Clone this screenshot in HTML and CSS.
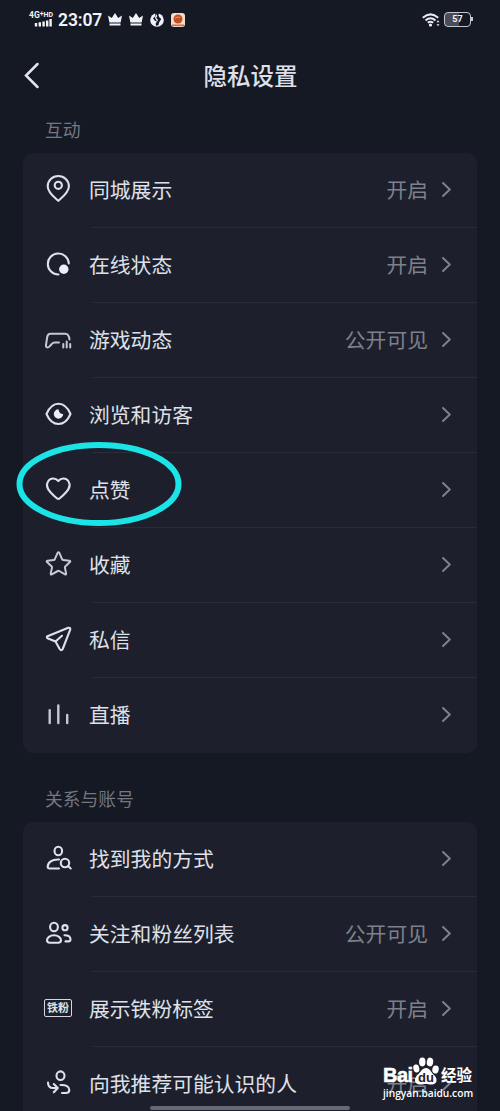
FILE: index.html
```html
<!DOCTYPE html>
<html lang="zh-CN">
<head>
<meta charset="utf-8">
<title>隐私设置</title>
<link rel="stylesheet" href="styles.css">
</head>
<body>
<svg class="defs" width="0" height="0">
  <symbol id="chev" viewBox="0 0 12 17"><path d="M2 2 8.800 8.500 2 15"/></symbol>
  <symbol id="crown" viewBox="0 0 14 13"><path d="M0 2.500 3.800 5 7 0l3.200 5L14 2.500 12.600 9.600H1.400ZM1.500 10.500h11v1.900h-11Z"/></symbol>
</svg>
<div class="phone">
  <div class="status">
    <div class="signal">
      <span class="net">4G<sup>+</sup><small>HD</small></span>
      <svg width="18" height="9" viewBox="0 0 18 9"><path d="M.8 5h2.400v3.500H.8ZM4.600 4.300H7v4.200H4.600ZM8.400 3.500h2.400v5H8.400ZM12 2.500h2.400v6H12ZM15.400 1h2.400v7.500h-2.400Z"/></svg>
    </div>
    <span class="time">23:07</span>
    <svg class="crown" width="14" height="13"><use href="#crown"/></svg>
    <svg class="crown" width="14" height="13"><use href="#crown"/></svg>
    <svg class="globe" width="14" height="14" viewBox="0 0 14 14"><circle cx="7" cy="7" r="6.800"/><path class="cut" d="M5.300 0H9.800L8.300 2 9.300 4.200 11.200 6 9 9.700 8.500 12 6.500 13 5.500 11 7 8.500 5 7.800 3 5.500 5 3.500Z"/><path d="M6 1 7.300 3 6.200 5 7.700 6.500 8 8.500 6.500 7.500 5 5Z"/></svg>
    <svg class="app" width="14" height="14" viewBox="0 0 14 14"><rect width="14" height="14" rx="3" fill="#f3dccb"/><circle cx="7" cy="6" r="4.500" fill="#c0501f"/><path d="M4 5.500Q6 3 9 4.500" stroke="#ef9a58" fill="none"/><path d="M1 12.300h12" stroke="#d86a4c" stroke-width="1.600"/></svg>
    <svg class="wifi" width="18" height="14" viewBox="0 0 18 14"><path d="M.8 4.700Q8.500-2 16.200 4.700M3.500 7.400Q8.500 3 13.500 7.400M5.800 9.800Q8.500 7.700 11.200 9.800"/><circle cx="8.500" cy="12" r="1.600"/><path class="dots" d="m16 7.300 1.500 2h-3ZM16 13.200l-1.500-2h3Z"/></svg>
    <div class="battery"><span>57</span></div>
  </div>

  <header class="bar">
    <svg class="back" width="16" height="27" viewBox="0 0 16 27"><path d="M13.500 2 2 13.500l11.500 11.500"/></svg>
    <h1>隐私设置</h1>
  </header>

  <h2 class="label">互动</h2>
  <ul class="card">
    <li class="row">
      <svg class="icon" viewBox="0 0 33 33"><path d="M16.300 27.800C14 25.500 5.700 20 5.700 13.200a10.600 10.200 0 0 1 21.200 0C26.900 20 18.600 25.500 16.300 27.800Z"/><circle cx="16.300" cy="12.300" r="3.600"/></svg>
      <div class="body"><span class="name">同城展示</span><span class="value">开启</span><svg class="chev"><use href="#chev"/></svg></div>
    </li>
    <li class="row">
      <svg class="icon" viewBox="0 0 33 33"><path d="M26.800 15.500A10.500 10.500 0 1 0 16.500 26.500"/><circle class="solid" cx="21.800" cy="21.300" r="4.700"/></svg>
      <div class="body"><span class="name">在线状态</span><span class="value">开启</span><svg class="chev"><use href="#chev"/></svg></div>
    </li>
    <li class="row">
      <svg class="icon dim" viewBox="0 0 33 33"><path d="M27.500 16.500C27 12.500 26 10.700 23.500 10.700H8.500C6.500 10.700 5.600 12 5.200 14L4 22c-.5 3 2.500 3 4 1l1.700-2q1.200-1.500 3-1.500H17"/><path d="M21.300 21v3.500M24.700 18.500v6M28.200 21v3.500"/></svg>
      <div class="body"><span class="name">游戏动态</span><span class="value">公开可见</span><svg class="chev"><use href="#chev"/></svg></div>
    </li>
    <li class="row">
      <svg class="icon" viewBox="0 0 33 33"><path d="M4.500 16C7.500 9 12 5.800 16.500 5.800S25.500 9 28.500 16C25.500 23 21 26 16.500 26S7.500 23 4.500 16Z"/><path class="solid" d="M16.500 11.300a4.700 4.700 0 1 0 4.700 4.700q-4.200.2-4.700-4.700Z"/></svg>
      <div class="body"><span class="name">浏览和访客</span><svg class="chev"><use href="#chev"/></svg></div>
    </li>
    <li class="row">
      <svg class="icon" viewBox="0 0 33 33"><path d="M16.300 8C13.500 4.500 8.500 4.700 6.300 8c-2.400 3.700-.8 8 2.200 11.200 2 2.200 4.200 4.300 6.300 6.100q1.500 1.300 3 0c2.100-1.800 4.300-3.900 6.300-6.100 3-3.200 4.600-7.500 2.200-11.200-2.200-3.300-7.200-3.500-10 0Z"/></svg>
      <div class="body"><span class="name">点赞</span><svg class="chev"><use href="#chev"/></svg></div>
      <svg class="ring" width="166" height="86" viewBox="0 0 166 86"><ellipse cx="83" cy="43" rx="79.500" ry="39"/></svg>
    </li>
    <li class="row">
      <svg class="icon dim" viewBox="0 0 33 33"><path d="m15.600 4.800-2.900 6.600q-.3.500-1 .6l-6.300.8q-1.300.3-.4 1.300l4.700 4.300q.5.500.3 1.200l-1.300 5.800q-.2 1.500 1.100.9l6-3.300q.7-.4 1.400 0l5.800 3.300q1.300.6 1.100-.9l-1.200-5.800q-.1-.7.400-1.200l4.600-4.300q.9-1-.4-1.300l-6.300-.8q-.7-.1-1-.6l-2.900-6.600q-.8-1.300-1.700 0Z"/></svg>
      <div class="body"><span class="name">收藏</span><svg class="chev"><use href="#chev"/></svg></div>
    </li>
    <li class="row">
      <svg class="icon" viewBox="0 0 33 33"><path d="M5.500 13.200 26.300 4.800q2.400-.6 1.900 1.800L20.700 26q-1.400 2.300-3 0l-4.200-7.500-8-3.300q-1.300-1 0-2ZM13.500 18.500l6.500-5.700"/></svg>
      <div class="body"><span class="name">私信</span><svg class="chev"><use href="#chev"/></svg></div>
    </li>
    <li class="row">
      <svg class="icon dim bars" viewBox="0 0 33 33"><path d="M7.700 12.300V25M16.300 7.500V25M25.200 17v8"/></svg>
      <div class="body"><span class="name">直播</span><svg class="chev"><use href="#chev"/></svg></div>
    </li>
  </ul>

  <h2 class="label second">关系与账号</h2>
  <ul class="card open">
    <li class="row">
      <svg class="icon" viewBox="0 0 33 33"><ellipse cx="16.300" cy="9" rx="3.800" ry="4.300"/><path d="M17 17.500C10 17 5.700 20.500 5.700 24.800c0 1.300.7 1.700 2 1.700H17"/><circle cx="23" cy="21" r="4.200"/><path d="m26 24 2.700 2.500"/></svg>
      <div class="body"><span class="name">找到我的方式</span><svg class="chev"><use href="#chev"/></svg></div>
    </li>
    <li class="row">
      <svg class="icon" viewBox="0 0 33 33"><ellipse cx="12" cy="10" rx="3.900" ry="4.300"/><path d="M12 18.300c-4.200 0-7 2.400-7 5 0 1.700 1 2.400 2.800 2.400h8.400c1.800 0 2.800-.7 2.800-2.400 0-2.600-2.800-5-7-5Z"/><circle cx="23" cy="10.700" r="2.600"/><path d="M22.500 18.300c4 0 6 1.900 6 4.100 0 1.500-.8 2-2.300 2h-2.700"/></svg>
      <div class="body"><span class="name">关注和粉丝列表</span><span class="value">公开可见</span><svg class="chev"><use href="#chev"/></svg></div>
    </li>
    <li class="row">
      <div class="icon badge"><span>铁粉</span></div>
      <div class="body"><span class="name">展示铁粉标签</span><span class="value">开启</span><svg class="chev"><use href="#chev"/></svg></div>
    </li>
    <li class="row">
      <svg class="icon" viewBox="0 0 33 33"><ellipse cx="18.500" cy="8.700" rx="4" ry="4.300"/><path d="M18.500 18c5.500-.5 8.800 2 8.800 5 0 2.200-1.300 3-3.300 3h-4M6 15.500c0 3.500 2 5.500 5 5.500h4.500M11.800 17l4 4-4 4.300"/></svg>
      <div class="body"><span class="name">向我推荐可能认识的人</span><span class="value">开启</span><svg class="chev"><use href="#chev"/></svg></div>
    </li>
  </ul>

  <div class="home"></div>
  <div class="mark">
    <div class="brand"><span class="bai">Bai</span><span class="paw"><svg width="28" height="30" viewBox="0 0 28 30"><ellipse cx="4.300" cy="11.500" rx="3" ry="4" transform="rotate(-12 4.300 11.500)"/><ellipse cx="10.300" cy="5" rx="3.200" ry="4.400"/><ellipse cx="18" cy="5" rx="3.200" ry="4.400" transform="rotate(8 18 5)"/><ellipse cx="23.500" cy="12.500" rx="3.200" ry="4" transform="rotate(12 23.500 12.500)"/><path d="M14 11c4 0 5 4.500 8 7 4 3.500 3.200 9-1.500 9.500-3 .4-4-.5-6.500-.5s-4 .9-7 .5C2.500 27 1.500 21.500 5.500 18 8.500 15.500 10 11 14 11Z"/></svg><i>du</i></span><span class="jy">经验</span></div>
    <div class="url">jingyan.baidu.com</div>
  </div>
</div>
</body>
</html>
```
FILE: styles.css
```css
* { box-sizing: border-box; }
body { margin: 0; background: #151924; }
.defs { position: absolute; }
.phone {
  position: relative;
  display: flex;
  flex-direction: column;
  width: 500px;
  height: 1111px;
  overflow: hidden;
  background: #151924;
  color: #dfe0e9;
  font-family: "Noto Sans CJK SC", sans-serif;
}
.phone > * { flex: none; }

/* status bar */
.status {
  display: flex;
  align-items: center;
  height: 39px;
  padding: 0 28px 0 29px;
  color: #f2f3f8;
  fill: #f2f3f8;
  font-family: Roboto, sans-serif;
}
.signal { display: flex; flex-direction: column; width: 26px; height: 16px; margin-top: -1px; }
.signal svg { margin: -1px 0 0 5px; }
.net { display: block; height: 8px; font-size: 8.5px; line-height: 8px; font-weight: 700; white-space: nowrap; }
.net sup { font-size: 7px; line-height: 0; vertical-align: 2px; }
.net small { font-size: 7px; line-height: 0; vertical-align: 1px; }
.time { width: 53px; padding-left: 3px; font-size: 17.5px; font-weight: 600; letter-spacing: -0.1px; line-height: 20px; }
.crown { margin-right: 7px; }
.globe .cut { fill: #151924; }
.app { margin-left: 7px; }
.wifi { margin-left: auto; }
.wifi path { fill: none; stroke: #e8e9f0; stroke-width: 2; }
.wifi .dots { fill: #e8e9f0; stroke: none; }
.battery {
  position: relative;
  width: 27px;
  height: 15px;
  margin: 0 1px 0 4px;
  border: 1.5px solid #c5c7d0;
  border-radius: 4px;
  background: linear-gradient(90deg, #4a4d59 55%, transparent 55%);
  text-align: center;
  font-size: 9px;
  line-height: 13px;
  font-weight: 700;
}
.battery::after { content: ""; position: absolute; right: -3px; top: 4px; width: 2px; height: 4px; background: #c5c7d0; }

/* title bar */
.bar { display: flex; align-items: center; height: 72px; padding-left: 24px; }
.back { fill: none; stroke: #e3e4ec; stroke-width: 2.5; stroke-linecap: round; }
.bar h1 { flex: 1; margin: 0; padding-right: 39px; text-align: center; font-size: 23.5px; line-height: 34px; font-weight: 500; }

.label { margin: 0 0 0 45px; height: 42px; font-size: 17.8px; line-height: 37px; font-weight: 400; color: #747681; }
.label.second { height: 69px; line-height: 90px; }

/* settings list */
.card { margin: 0 23px; padding: 0; list-style: none; border-radius: 10px; background: #1d202c; }
.row { position: relative; display: flex; align-items: center; height: 75px; padding-left: 19px; }
.icon { flex: none; width: 33px; height: 33px; margin-bottom: 2px; fill: none; stroke: #dfe0ea; stroke-width: 2.1; stroke-linecap: round; stroke-linejoin: round; }
.icon.dim { stroke: #c6c8d2; stroke-width: 2; }
.icon.bars { stroke-width: 2.4; }
.icon .solid { fill: #eeeff6; stroke: none; }
.body { display: flex; align-items: center; flex: 1; height: 75px; margin-left: 14px; padding: 0 24px 2px 0; font-size: 20.8px; line-height: 30px; }
.row:not(:last-child)::after { content: ""; position: absolute; left: 69px; right: 0; bottom: 0; height: 1px; background: #2a2c38; }
.name { margin: -2px auto 0 0; white-space: nowrap; }
.value { margin: -1px 13px 0 0; color: #7e808b; }
.chev { flex: none; width: 12px; height: 17px; fill: none; stroke: #7e808b; stroke-width: 2; stroke-linecap: round; stroke-linejoin: round; }
.badge { display: flex; align-items: center; justify-content: center; height: 18px; margin-top: -2px; }
.badge span { width: 28px; height: 18px; border: 1.8px solid #d5d6df; border-radius: 2px; text-align: center; font-size: 11px; line-height: 15px; font-weight: 700; margin-right: 1px; }
.ring { position: absolute; left: -7px; top: -12px; fill: none; stroke: #1be4e7; stroke-width: 6; }

/* overlays */
.home { position: absolute; left: 150px; top: 1106px; width: 200px; height: 4px; border-radius: 2px; background: #666873; }
.mark { position: absolute; left: 383px; top: 1057px; width: 92px; color: #fff; font-family: "Open Sans", sans-serif; }
.brand { display: flex; align-items: flex-end; height: 30px; }
.bai { width: 29px; font-family: "Liberation Sans", sans-serif; font-size: 20px; line-height: 23px; font-weight: 700; letter-spacing: -0.5px; -webkit-text-stroke: 0.5px #fff; }
.paw { position: relative; width: 28px; height: 30px; }
.paw svg { display: block; fill: #fff; }
.paw i { position: absolute; left: 0; right: 0; top: 14px; text-align: center; color: #20232f; font: 700 13px/14px "Liberation Sans", sans-serif; }
.jy { font-family: "Noto Sans CJK SC", sans-serif; font-size: 15.5px; line-height: 22px; font-weight: 700; margin: 0 0 2px 1px; white-space: nowrap; }
.url { margin-top: -1px; font-size: 10.2px; line-height: 14px; font-weight: 600; white-space: nowrap; }
```
